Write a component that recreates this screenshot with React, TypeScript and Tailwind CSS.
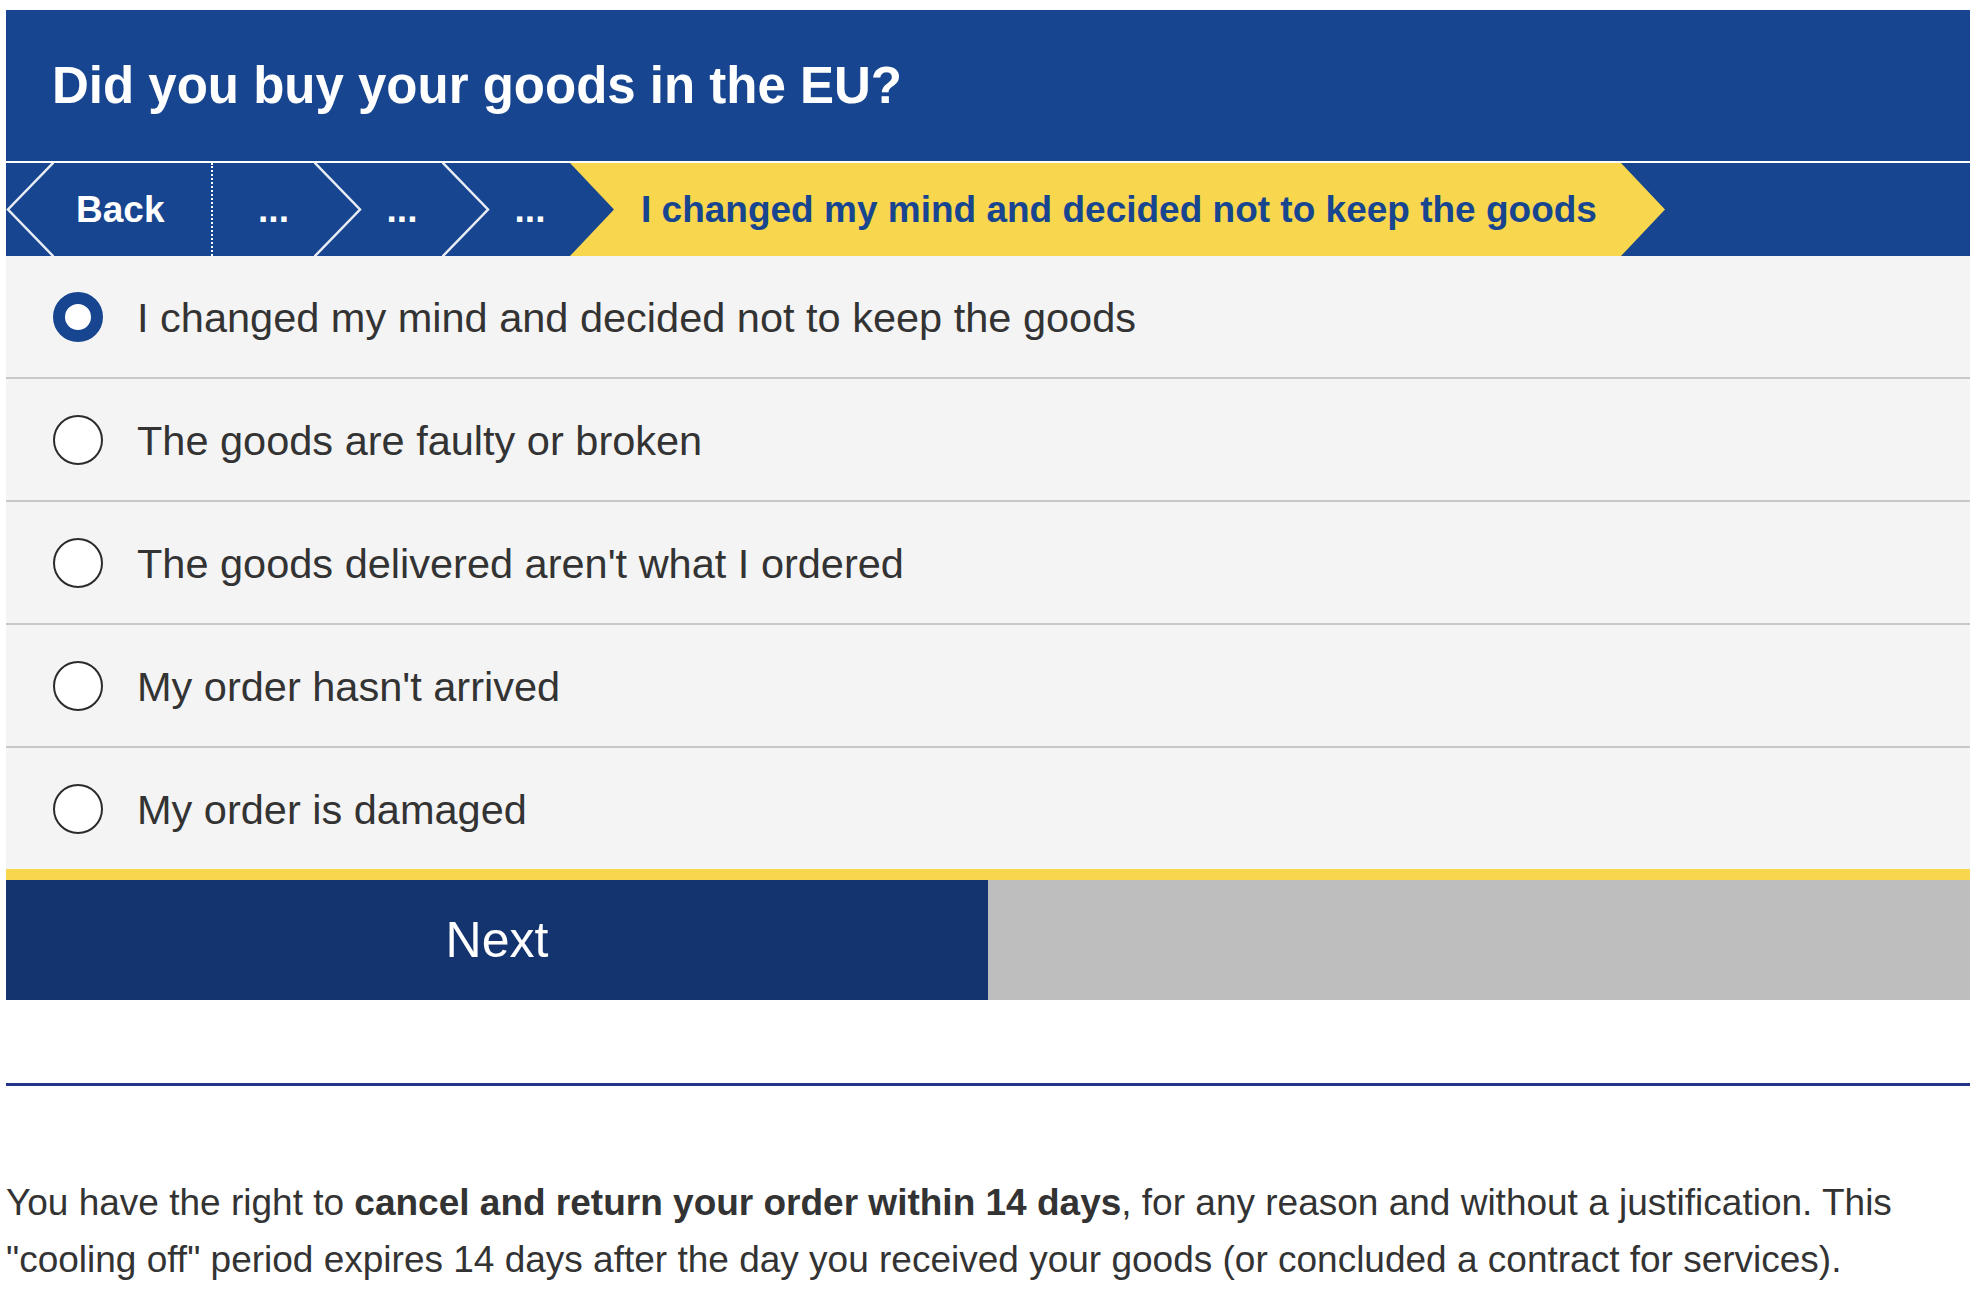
import React, { useState } from 'react';

const options = [
  'I changed my mind and decided not to keep the goods',
  'The goods are faulty or broken',
  "The goods delivered aren't what I ordered",
  "My order hasn't arrived",
  'My order is damaged',
];

const font = { fontFamily: '"Liberation Sans", Arial, Helvetica, sans-serif' };

// white outlined chevron between crumbs
const Chevron = ({ left }: { left?: boolean }) => (
  <svg width="48" height="93" viewBox="0 0 48 93" className="shrink-0">
    {left ? (
      <polyline points="48,-1 2,46.5 48,94" fill="none" stroke="#e8ecf4" strokeWidth="2.5" />
    ) : (
      <polyline points="0,-1 46,46.5 0,94" fill="none" stroke="#e8ecf4" strokeWidth="2.5" />
    )}
  </svg>
);

// solid arrow tip, colour of the crumb before it
const ArrowTip = ({ fill, bg }: { fill: string; bg: string }) => (
  <svg width="46" height="93" viewBox="0 0 46 93" className="shrink-0" style={{ background: bg }}>
    <polygon points="0,0 44,46.5 0,93" fill={fill} />
  </svg>
);

const Radio = ({ checked }: { checked: boolean }) =>
  checked ? (
    <span className="w-[50px] h-[50px] shrink-0 rounded-full border-[12.5px] border-[#17458f] bg-white" />
  ) : (
    <span className="w-[50px] h-[50px] shrink-0 rounded-full border-2 border-[#2b2b2b] bg-white" />
  );

const App = () => {
  const [selected, setSelected] = useState(0);

  return (
    <div className="min-h-screen bg-white" style={font}>
      <div className="w-[1964px] ml-[6px] pt-[10px]">
        {/* Question header */}
        <div className="h-[151px] bg-[#17458f] flex items-center pl-[46px]">
          <h1 className="text-[51px] font-bold text-white leading-none">Did you buy your goods in the EU?</h1>
        </div>

        {/* Breadcrumb */}
        <div className="mt-[2px] h-[93px] bg-[#17458f] flex items-stretch text-[37px] font-bold text-white">
          <Chevron left />
          <button className="w-[157px] shrink-0 flex items-center pl-[22px] font-bold">Back</button>
          <div className="w-0 border-l-2 border-dotted border-white" />
          <span className="w-[101px] shrink-0 flex items-center justify-center pl-[20px]">...</span>
          <Chevron />
          <span className="w-[80px] shrink-0 flex items-center justify-center">...</span>
          <Chevron />
          <span className="w-[80px] shrink-0 flex items-center justify-center">...</span>
          <ArrowTip fill="#17458f" bg="#f8d64d" />
          <span className="w-[1005px] shrink-0 bg-[#f8d64d] text-[#17458f] flex items-center pl-[25px]">
            I changed my mind and decided not to keep the goods
          </span>
          <ArrowTip fill="#f8d64d" bg="#17458f" />
          <div className="flex-1" />
        </div>

        {/* Options */}
        <div className="bg-[#f4f4f4]">
          {options.map((opt, i) => (
            <label
              key={opt}
              onClick={() => setSelected(i)}
              className={`h-[121px] flex items-center pl-[47px] gap-[34px] cursor-pointer box-content ${
                i < options.length - 1 ? 'border-b-2 border-[#c8c8c8]' : ''
              }`}
            >
              <Radio checked={selected === i} />
              <span className="text-[41.5px] text-[#333333] pt-[3px]">{opt}</span>
            </label>
          ))}
        </div>

        {/* Actions */}
        <div className="h-[11px] bg-[#f8d64d]" />
        <div className="flex h-[120px]">
          <button className="flex-1 bg-[#13346f] text-white text-[50px] flex items-center justify-center">Next</button>
          <div className="flex-1 bg-[#bebebe]" />
        </div>

        <div className="mt-[83px] border-t-[3px] border-[#23348a]" />

        <p className="mt-[88px] text-[37px] leading-[57px] text-[#333333]">
          <span>You have the right to </span>
          <strong className="font-bold">cancel and return your order within 14 days</strong>
          <span>, for any reason and without a justification. This</span>
          <br />
          <span>"cooling off" period expires 14 days after the day you received your goods (or concluded a contract for services).</span>
        </p>
      </div>
    </div>
  );
};

export default App;
